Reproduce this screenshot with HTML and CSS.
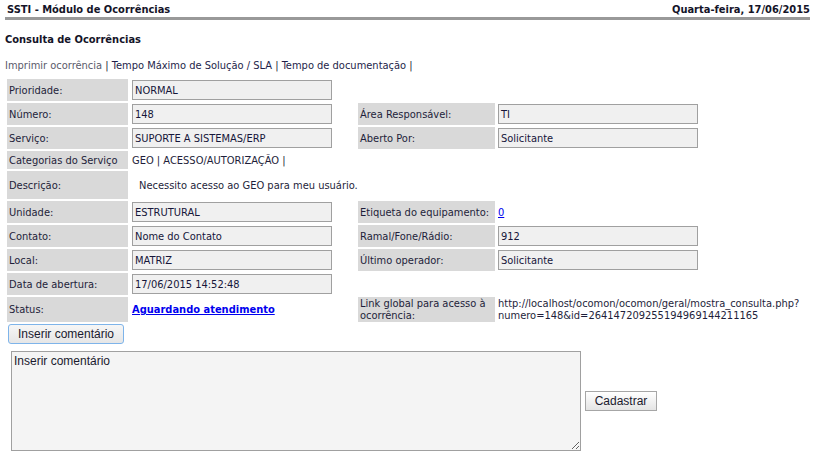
FILE: index.html
```html
<!DOCTYPE html>
<html lang="pt-BR">
<head>
<meta charset="utf-8">
<title>SSTI - Módulo de Ocorrências</title>
<link rel="stylesheet" href="styles.css">
</head>
<body>
<div class="page">
  <div class="topbar">
    <span class="title">SSTI - Módulo de Ocorrências</span>
    <span class="date">Quarta-feira, 17/06/2015</span>
  </div>
  <h1 class="subtitle">Consulta de Ocorrências</h1>
  <p class="links"><a class="print" href="#">Imprimir ocorrência</a> | <a href="#">Tempo Máximo de Solução / SLA</a> | <a href="#">Tempo de documentação</a> |</p>

  <table class="details">
    <colgroup>
      <col class="c-label"><col class="c-value"><col class="c-label2"><col class="c-value2">
    </colgroup>
    <tr>
      <td class="lbl">Prioridade:</td>
      <td><div class="field">NORMAL</div></td>
      <td></td><td></td>
    </tr>
    <tr>
      <td class="lbl">Número:</td>
      <td><div class="field">148</div></td>
      <td class="lbl">Área Responsável:</td>
      <td class="v2"><div class="field">TI</div></td>
    </tr>
    <tr>
      <td class="lbl">Serviço:</td>
      <td><div class="field">SUPORTE A SISTEMAS/ERP</div></td>
      <td class="lbl">Aberto Por:</td>
      <td class="v2"><div class="field">Solicitante</div></td>
    </tr>
    <tr class="short">
      <td class="lbl">Categorias do Serviço</td>
      <td colspan="3">GEO | ACESSO/AUTORIZAÇÃO |</td>
    </tr>
    <tr class="tall">
      <td class="lbl">Descrição:</td>
      <td colspan="3" class="desc">Necessito acesso ao GEO para meu usuário.</td>
    </tr>
    <tr>
      <td class="lbl">Unidade:</td>
      <td><div class="field">ESTRUTURAL</div></td>
      <td class="lbl">Etiqueta do equipamento:</td>
      <td class="v2"><a class="plain-link" href="#">0</a></td>
    </tr>
    <tr>
      <td class="lbl">Contato:</td>
      <td><div class="field">Nome do Contato</div></td>
      <td class="lbl">Ramal/Fone/Rádio:</td>
      <td class="v2"><div class="field">912</div></td>
    </tr>
    <tr>
      <td class="lbl">Local:</td>
      <td><div class="field">MATRIZ</div></td>
      <td class="lbl">Último operador:</td>
      <td class="v2"><div class="field">Solicitante</div></td>
    </tr>
    <tr>
      <td class="lbl">Data de abertura:</td>
      <td><div class="field">17/06/2015 14:52:48</div></td>
      <td></td><td></td>
    </tr>
    <tr class="last">
      <td class="lbl">Status:</td>
      <td><a class="status-link" href="#">Aguardando atendimento</a></td>
      <td class="lbl lbl-wrap">Link global para acesso à ocorrência:</td>
      <td class="url v2">http://localhost/ocomon/ocomon/geral/mostra_consulta.php?<br>numero=148&amp;id=264147209255194969144211165</td>
    </tr>
  </table>

  <div class="comment">
    <button class="btn btn-focus" type="button">Inserir comentário</button>
    <div class="comment-row">
      <textarea class="comment-box">Inserir comentário</textarea>
      <button class="btn btn-plain" type="button">Cadastrar</button>
    </div>
  </div>
</div>
</body>
</html>
```
FILE: styles.css
```css
html, body {
  margin: 0;
  padding: 0;
  background: #ffffff;
}

body {
  font-family: "DejaVu Sans Condensed", "DejaVu Sans", sans-serif;
  font-size: 11px;
  color: #1e1e3a;
}

.page {
  padding: 0 7px 0 5px;
}

.topbar {
  display: flex;
  justify-content: space-between;
  padding: 3px 0 0 2px;
  line-height: 14px;
  border-bottom: 3px solid #999999;
  font-weight: bold;
  color: #141428;
}

.subtitle {
  margin: 13px 0 0 0;
  font-size: 11px;
  line-height: 14px;
  font-weight: bold;
  color: #141428;
}

.links {
  margin: 12px 0 0 0;
  line-height: 14px;
}

.links a {
  color: #1e1e4a;
  text-decoration: none;
}

.links a.print {
  color: #5a5a6a;
}

.details {
  margin-top: 4px;
  border-collapse: separate;
  border-spacing: 2px;
  table-layout: fixed;
  width: 806px;
}

.c-label { width: 121px; }
.c-value { width: 226px; }
.c-label2 { width: 137px; }
.c-value2 { width: auto; }

.details td {
  height: 22px;
  padding: 0 2px;
  vertical-align: middle;
  white-space: nowrap;
}

.details td.v2 {
  padding-left: 1px;
}

.details td.lbl {
  background: #d9d9d9;
}

.details tr.short td { height: 18px; }
.details tr.tall td { height: 28px; }

.details td.desc {
  padding-left: 9px;
}

.details td.lbl-wrap {
  white-space: normal;
  line-height: 12px;
  vertical-align: top;
  padding-top: 1px;
  height: 24px;
}

.details td.url {
  white-space: nowrap;
  line-height: 12px;
  vertical-align: top;
  padding-top: 1px;
}

.details tr.last td {
  height: 24px;
}

.field {
  box-sizing: border-box;
  width: 200px;
  height: 20px;
  line-height: 20px;
  border: 1px solid #a0a0a0;
  background: #f0f0f0;
  padding: 0 2px;
  color: #16163a;
}

.plain-link {
  color: #0000ee;
  text-decoration: underline;
}

.status-link {
  color: #0000ee;
  font-weight: bold;
  text-decoration: underline;
}

.comment {
  padding-top: 0;
}

.btn {
  font-family: "Liberation Sans", Arial, sans-serif;
  font-size: 12px;
  color: #1a1a2e;
  height: 20px;
  padding: 0 8px;
  margin: 0;
  cursor: default;
}

.btn-focus {
  margin-left: 3px;
  width: 116px;
  border: 1px solid #7eb4ea;
  border-radius: 3px;
  background: linear-gradient(#f6f6f6, #e6e6e6);
}

.btn-plain {
  width: 72px;
  border: 1px solid #a6a6a6;
  border-radius: 0;
  background: linear-gradient(#ffffff, #e4e4e4);
  margin-left: 4px;
}

.comment-row {
  display: flex;
  align-items: center;
  margin-top: 7px;
  padding-left: 6px;
}

.comment-box {
  box-sizing: border-box;
  width: 570px;
  height: 100px;
  margin: 0;
  border: 1px solid #a0a0a0;
  background: #f4f4f4;
  font-family: "Liberation Sans", Arial, sans-serif;
  font-size: 12px;
  color: #1a1a2e;
  padding: 2px 2px;
  resize: both;
}
```
